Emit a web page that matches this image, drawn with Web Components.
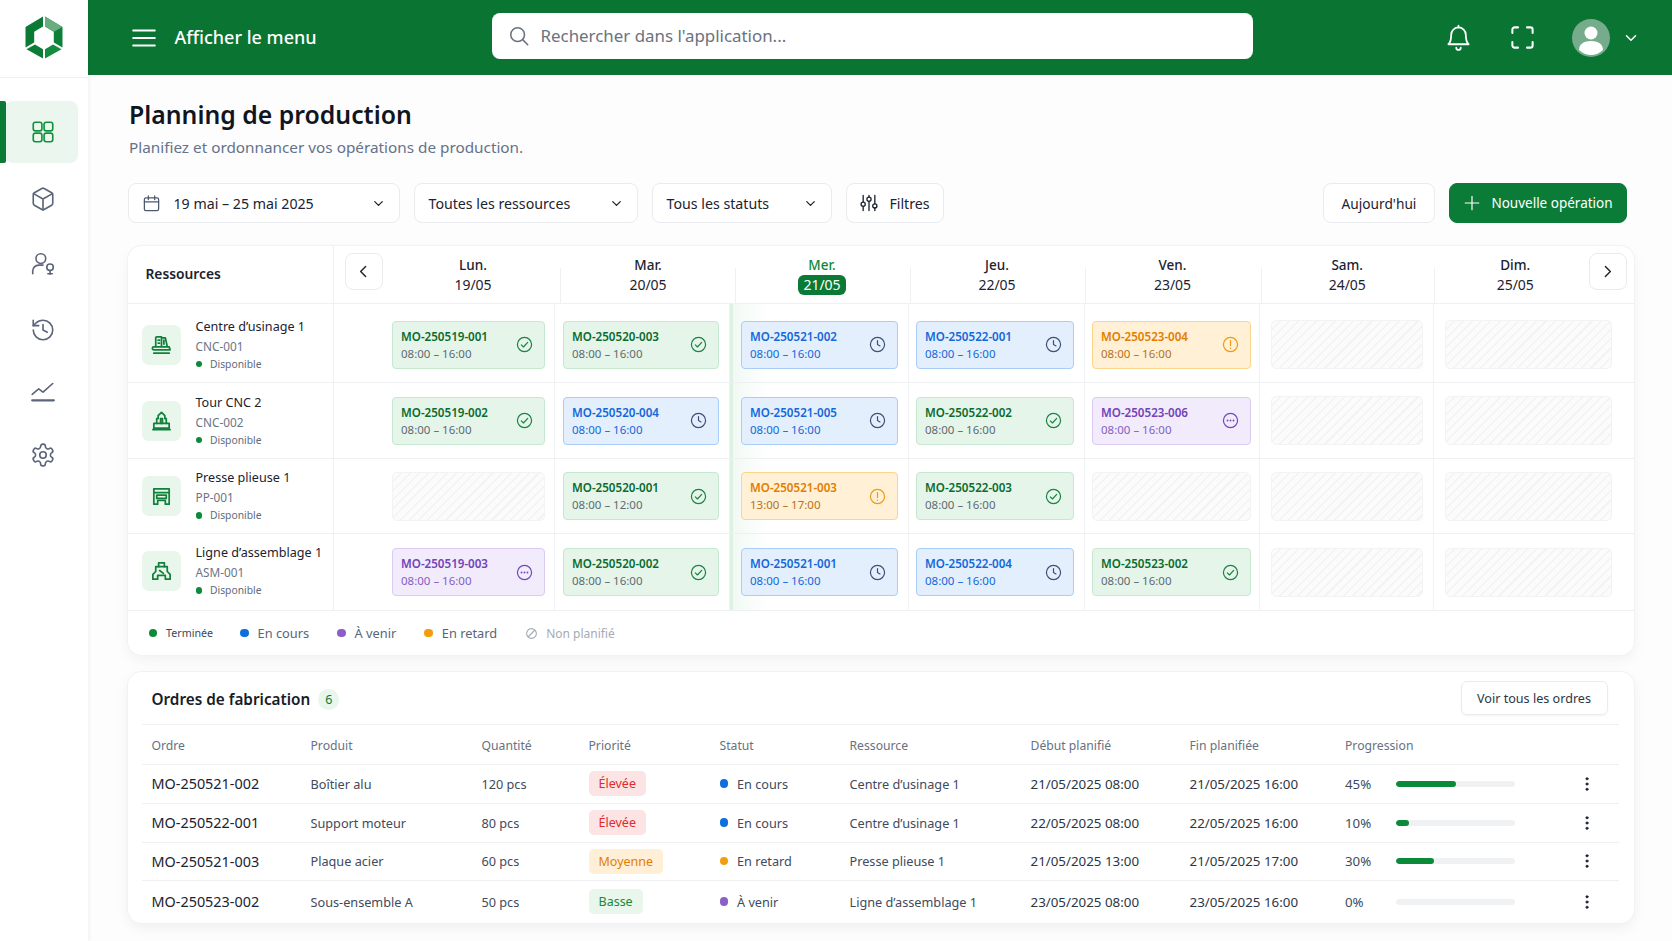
<!DOCTYPE html>
<html lang="fr">
<head>
<meta charset="utf-8">
<title>Planning de production</title>
<style>
  html, body { margin: 0; height: 100%; }
  body {
    width: 1672px;
    height: 941px;
    overflow: hidden;
    display: flex;
    background: #fdfdfe;
    color: #111827;
    font-family: "Noto Sans", "Liberation Sans", sans-serif;
  }
  app-main { flex: 1; min-width: 0; }
</style>
</head>
<body>
<app-sidebar></app-sidebar>
<app-main>
  <app-header></app-header>
  <page-content>
    <page-title heading="Planning de production">Planifiez et ordonnancer vos opérations de production.</page-title>
    <page-toolbar>
      <ui-select icon="calendar" width="272" pad="13" gap="13">19 mai – 25 mai 2025</ui-select>
      <ui-select width="224">Toutes les ressources</ui-select>
      <ui-select width="180">Tous les statuts</ui-select>
      <ui-button icon="sliders" width="98">Filtres</ui-button>
      <ui-button width="112" slot="right" size="13.7">Aujourd'hui</ui-button>
      <ui-button primary icon="plus" width="178" slot="right">Nouvelle opération</ui-button>
    </page-toolbar>
    <planning-board></planning-board>
    <orders-card></orders-card>
  </page-content>
</app-main>

<script>
const ICONS = {
  menu: '<path d="M2 5h20M2 12h20M2 19h20"/>',
  search: '<circle cx="10.5" cy="10.5" r="7.5"/><path d="m16 16 5.5 5.5"/>',
  bell: '<path d="M12 3a6.5 6.5 0 0 0-6.5 6.5c0 5-1 7.2-2.5 8.5h18c-1.5-1.3-2.5-3.5-2.5-8.5A6.5 6.5 0 0 0 12 3z"/><path d="M12 1.5V3M10 21a2 2 0 0 0 4 0"/>',
  expand: '<path d="M8 3H5a2 2 0 0 0-2 2v3M16 3h3a2 2 0 0 1 2 2v3M8 21H5a2 2 0 0 1-2-2v-3M16 21h3a2 2 0 0 0 2-2v-3"/>',
  chevron: '<path d="m6 9 6 6 6-6"/>',
  left: '<path d="m15 5-7 7 7 7"/>',
  right: '<path d="m9 5 7 7-7 7"/>',
  calendar: '<rect x="3" y="5" width="18" height="16" rx="2"/><path d="M3 10h18M8 2.5V7M16 2.5V7"/>',
  sliders: '<path d="M5 3v8M5 16v5M12 3v2M12 10v11M19 3v10M19 18v3"/><circle cx="5" cy="13.5" r="2.5"/><circle cx="12" cy="7.5" r="2.5"/><circle cx="19" cy="15.5" r="2.5"/>',
  plus: '<path d="M12 3v18M3 12h18"/>',
  done: '<circle cx="12" cy="12" r="10"/><path d="m7.5 12.5 3 3 6-6.5"/>',
  progress: '<circle cx="12" cy="12" r="10"/><path d="M12 6.5V12l3.5 2"/>',
  late: '<circle cx="12" cy="12" r="10"/><path d="M12 6.5v7M12 17v.5"/>',
  todo: '<circle cx="12" cy="12" r="10"/><g fill="currentColor" stroke="none"><circle cx="7.8" cy="12" r="1.3"/><circle cx="12" cy="12" r="1.3"/><circle cx="16.2" cy="12" r="1.3"/></g>',
  grid: '<rect x="3" y="3" width="8" height="8" rx="2"/><rect x="13" y="3" width="8" height="8" rx="2"/><rect x="3" y="13" width="8" height="8" rx="2"/><rect x="13" y="13" width="8" height="8" rx="2"/>',
  cube: '<path d="M21 8a2 2 0 0 0-1-1.73l-7-4a2 2 0 0 0-2 0l-7 4A2 2 0 0 0 3 8v8a2 2 0 0 0 1 1.73l7 4a2 2 0 0 0 2 0l7-4A2 2 0 0 0 21 16Z"/><path d="m3.3 7 8.7 5 8.7-5M12 22V12"/>',
  userbadge: '<circle cx="10" cy="7" r="4.5"/><path d="M2.5 21v-2.5a5.5 5.5 0 0 1 5.5-5.5h4"/><circle cx="18.5" cy="15" r="3"/><path d="M18.5 18v3.5M16.5 21h4"/>',
  history: '<path d="M3 12a9 9 0 1 0 9-9 9.75 9.75 0 0 0-6.74 2.74L3 8"/><path d="M3 3v5h5M12 7v5l4 2"/>',
  chart: '<path d="m2 16 6-5 4 3 9-8"/><path d="M2 21.5h20" stroke-width="2"/>',
  gear: '<path d="M12.22 2h-.44a2 2 0 0 0-2 2v.18a2 2 0 0 1-1 1.73l-.43.25a2 2 0 0 1-2 0l-.15-.08a2 2 0 0 0-2.73.73l-.22.38a2 2 0 0 0 .73 2.73l.15.1a2 2 0 0 1 1 1.72v.51a2 2 0 0 1-1 1.74l-.15.09a2 2 0 0 0-.73 2.73l.22.38a2 2 0 0 0 2.73.73l.15-.08a2 2 0 0 1 2 0l.43.25a2 2 0 0 1 1 1.73V20a2 2 0 0 0 2 2h.44a2 2 0 0 0 2-2v-.18a2 2 0 0 1 1-1.73l.43-.25a2 2 0 0 1 2 0l.15.08a2 2 0 0 0 2.73-.73l.22-.39a2 2 0 0 0-.73-2.73l-.15-.08a2 2 0 0 1-1-1.74v-.5a2 2 0 0 1 1-1.74l.15-.09a2 2 0 0 0 .73-2.73l-.22-.38a2 2 0 0 0-2.73-.73l-.15.08a2 2 0 0 1-2 0l-.43-.25a2 2 0 0 1-1-1.73V4a2 2 0 0 0-2-2z"/><circle cx="12" cy="12" r="3"/>',
  mill: '<path d="M6 14V5a1 1 0 0 1 1-1h5v10M12 5h4l2 9"/><path d="M8.5 7.5H10M8.5 10.5H10M14.5 7.5v4"/><path d="M4 14.5h16l1 3H4a1.5 1.5 0 0 1 0-3zM4 21h16"/>',
  lathe: '<path d="M7 15v-5h1.5V7L12 3.5 15.500 7v3H17v5"/><path d="M11 15v-5h2v5"/><path d="M4 20v-5h16v5zM3 21.500h18"/>',
  press: '<path d="M4 4h16v16h-4v-4H8v4H4z"/><path d="M4 8h16M7 10.500h10V14H7z"/>',
  line: '<path d="M9 3h6v4h3v5l3 3v5h-5v-4H8v4H3v-5l3-3V7h3z"/><path d="M9 7h6M10 11l4 3"/>',
  blocked: '<circle cx="12" cy="12" r="9"/><path d="m6 18 12-12"/>',
  dots: '<circle cx="12" cy="5" r="1.5" fill="currentColor"/><circle cx="12" cy="12" r="1.5" fill="currentColor"/><circle cx="12" cy="19" r="1.5" fill="currentColor"/>'
};

class UiIcon extends HTMLElement {
  connectedCallback() {
    const size = this.getAttribute("size") ?? 24;
    const sw = this.getAttribute("stroke") ?? 1.7;
    this.attachShadow({ mode: "open" }).innerHTML = `
      <style>:host { display: inline-flex; flex: none; } svg { display: block; }</style>
      <svg width="${size}" height="${size}" viewBox="0 0 24 24" fill="none" stroke="currentColor"
        stroke-width="${sw}" stroke-linecap="round" stroke-linejoin="round">${ICONS[this.getAttribute("name")]}</svg>`;
  }
}

class AppSidebar extends HTMLElement {
  connectedCallback() {
    const items = [["grid", 0], ["cube", 6], ["userbadge", 5], ["history", 5.5], ["chart", 0], ["gear", 5.5]];
    this.attachShadow({ mode: "open" }).innerHTML = `
      <style>
        :host {
          display: block;
          flex: none;
          width: 87.5px;
          height: 941px;
          background: #fff;
          box-shadow: 1px 0 4px rgba(16, 24, 40, .06);
          position: relative;
          z-index: 1;
        }
        .logo { height: 78px; display: flex; align-items: center; justify-content: center; border-bottom: 1px solid #f0f1f4; box-sizing: border-box; padding-bottom: 3px; }
        nav { padding-top: 23px; display: flex; flex-direction: column; }
        .item { height: 60px; display: flex; align-items: center; justify-content: center; color: #5a6579; margin-left: 5px; width: 73px; padding-left: 2px; box-sizing: border-box; position: relative; }
        .item.on { height: 62px; background: #ebf6ee; color: #12913f; border-radius: 8px; }
        .item.on::before { content: ""; position: absolute; left: -5px; top: 0; bottom: 0; width: 6px; background: #0a7a34; border-radius: 0 2px 2px 0; }
      </style>
      <div class="logo">
        <svg width="38" height="43" viewBox="-19 -21.5 38 43">
          <polygon points="-1,-21 -1,-11 -9.8,-5.8 -9.8,5 -18.5,10 -18.5,-10.5" fill="#0b7a35"/>
          <polygon points="1,-21 1,-11 9.8,-5.8 9.8,5 18.5,10 18.5,-10.5" fill="#0d8038"/>
          <polygon points="1,-21 1,-11 9.8,-5.8 18.5,-10.5" fill="#67ad7f"/>
          <polygon points="-17.5,11.8 -9,7 -1,11.8 -1,21" fill="#0c7b36"/>
          <polygon points="17.5,11.8 9,7 1,11.8 1,21" fill="#128c3f"/>
        </svg>
      </div>
      <nav>${items.map(([n, g], i) => `<div class="item ${i ? "" : "on"}" style="margin-top:${g}px"><ui-icon name="${n}" size="26" stroke="1.5"></ui-icon></div>`).join("")}</nav>`;
  }
}

class AppHeader extends HTMLElement {
  connectedCallback() {
    this.attachShadow({ mode: "open" }).innerHTML = `
      <style>
        :host { display: flex; align-items: center; height: 75px; background: #0a7433; color: #fff; padding-left: 43px; box-sizing: border-box; }
        .label { margin-left: 18px; width: 317px; font-size: 18px; font-weight: 500; padding-bottom: 2px; }
        .search { width: 761px; height: 46px; margin-top: -4px; background: #fff; border-radius: 8px; display: flex; align-items: center; gap: 11px; padding-left: 16px; box-sizing: border-box; color: #6b7280; font-size: 16.9px; }
        .actions { margin-left: 192px; display: flex; align-items: center; }
        .avatar { width: 38px; height: 38px; border-radius: 50%; background: #76ac8b; overflow: hidden; margin-left: 36px; }
        .avatar svg { display: block; }
      </style>
      <ui-icon name="menu" size="26" stroke="1.8"></ui-icon>
      <span class="label">Afficher le menu</span>
      <div class="search"><ui-icon name="search" size="22" stroke="1.7"></ui-icon><span>Rechercher dans l'application...</span></div>
      <div class="actions">
        <ui-icon name="bell" size="27" stroke="1.6"></ui-icon>
        <span style="width:37px"></span>
        <ui-icon name="expand" size="27" stroke="1.8"></ui-icon>
        <div class="avatar"><svg width="38" height="38" viewBox="0 0 38 38" fill="#fff"><circle cx="19" cy="14" r="6.5"/><path d="M7 31c0-6 5-9 12-9s12 3 12 9c-3 3-8 5-12 5s-9-2-12-5z"/></svg></div>
        <span style="width:12px"></span>
        <ui-icon name="chevron" size="18" stroke="2"></ui-icon>
      </div>`;
  }
}

class PageContent extends HTMLElement {
  connectedCallback() {
    this.attachShadow({ mode: "open" }).innerHTML = `
      <style>:host { display: flex; flex-direction: column; padding: 22px 38px 0 40px; }</style>
      <slot></slot>`;
  }
}

class PageTitle extends HTMLElement {
  connectedCallback() {
    this.attachShadow({ mode: "open" }).innerHTML = `
      <style>
        :host { display: block; padding-left: 1.5px; }
        h1 { margin: 0; font-size: 24.8px; line-height: 34px; font-weight: 600; color: #10151f; }
        p { margin: 5px 0 0; font-size: 15.3px; line-height: 22px; color: #64728a; }
      </style>
      <h1>${this.getAttribute("heading")}</h1>
      <p><slot></slot></p>`;
  }
}

class PageToolbar extends HTMLElement {
  connectedCallback() {
    this.attachShadow({ mode: "open" }).innerHTML = `
      <style>
        :host { display: flex; margin-top: 25px; height: 40px; gap: 14px; margin-bottom: 23px; }
        .right { margin-left: auto; display: flex; gap: 14px; margin-right: 7px; }
      </style>
      <slot></slot>
      <div class="right"><slot name="right"></slot></div>`;
  }
}

class UiSelect extends HTMLElement {
  connectedCallback() {
    const icon = this.getAttribute("icon");
    this.attachShadow({ mode: "open" }).innerHTML = `
      <style>
        :host {
          display: flex; align-items: center; box-sizing: border-box;
          width: ${this.getAttribute("width")}px; height: 40px;
          padding: 0 13px 0 ${this.getAttribute("pad") ?? 14}px;
          gap: ${this.getAttribute("gap") ?? 0}px;
          background: #fff; border: 1px solid #e9ebef; border-radius: 8px;
          font-size: 14.2px; color: #1b2230;
        }
        .t { flex: 1; white-space: nowrap; }
        ui-icon.i { color: #4d5a70; }
      </style>
      ${icon ? `<ui-icon class="i" name="${icon}" size="19" stroke="1.6"></ui-icon>` : ""}
      <span class="t"><slot></slot></span>
      <ui-icon name="chevron" size="15" stroke="2"></ui-icon>`;
  }
}

class UiButton extends HTMLElement {
  connectedCallback() {
    const icon = this.getAttribute("icon");
    const primary = this.hasAttribute("primary");
    const size = this.getAttribute("size") ?? (primary ? 13.5 : 14.2);
    this.attachShadow({ mode: "open" }).innerHTML = `
      <style>
        :host {
          display: flex; align-items: center; justify-content: center; box-sizing: border-box;
          width: ${this.getAttribute("width")}px; height: 40px; gap: ${primary ? 10 : 10}px;
          background: ${primary ? "#0b7c37" : "#fff"};
          color: ${primary ? "#fff" : "#1b2230"};
          border: 1px solid ${primary ? "#0b7c37" : "#e9ebef"};
          border-radius: 8px; font-size: ${size}px; white-space: nowrap;
        }
      </style>
      ${icon ? `<ui-icon name="${icon}" size="${primary ? 18 : 20}" stroke="1.6"></ui-icon>` : ""}
      <slot></slot>`;
  }
}

const CARD_THEME = {
  done: ["#e6f5ea", "#c6e8d0", "#0a6b2f", "#5e6a72", "#1a8244"],
  progress: ["#e3effd", "#a8cdf8", "#1467d8", "#1467d8", "#3f5078"],
  late: ["#fff0d6", "#fbd58e", "#e27d00", "#b4721a", "#ef9a12"],
  todo: ["#f2ebfc", "#dbcbf3", "#7142b8", "#8560c0", "#7347bb"]
};

class OpCard extends HTMLElement {
  connectedCallback() {
    const status = this.getAttribute("status");
    const root = this.attachShadow({ mode: "open" });
    if (status === "empty") {
      root.innerHTML = `
        <style>
          :host {
            display: block; width: 100%; height: 49px; box-sizing: border-box;
            border: 1px solid #f2f3f5; border-radius: 5px;
            background: repeating-linear-gradient(135deg, #fbfbfc 0 5px, #f2f3f5 5px 6.5px);
          }
        </style>`;
      return;
    }
    const [bg, border, idc, timec, iconc] = CARD_THEME[status];
    root.innerHTML = `
      <style>
        :host {
          display: flex; align-items: center; justify-content: space-between;
          width: 100%; height: 48px; box-sizing: border-box; padding: 0 11px 0 8.5px;
          background: ${bg}; border: 1px solid ${border}; border-radius: 4px;
        }
        .id { font-size: 11.6px; line-height: 17px; font-weight: 600; color: ${idc}; white-space: nowrap; }
        .time { font-size: 11.5px; line-height: 17px; color: ${timec}; white-space: nowrap; }
        ui-icon { color: ${iconc}; }
      </style>
      <div><div class="id">${this.getAttribute("op")}</div><div class="time">${this.getAttribute("time")}</div></div>
      <ui-icon name="${status}" size="17" stroke="1.7"></ui-icon>`;
  }
}

class ResourceCell extends HTMLElement {
  connectedCallback() {
    this.attachShadow({ mode: "open" }).innerHTML = `
      <style>
        :host { display: flex; align-items: center; gap: 15px; padding-left: 14px; height: 100%; box-sizing: border-box; }
        .tile { width: 39px; height: 40px; border-radius: 7px; background: #e8f6ec; color: #10803a; display: flex; align-items: center; justify-content: center; }
        .name { font-size: 12.6px; line-height: 20px; color: #1b2230; white-space: nowrap; }
        .code { font-size: 11.8px; line-height: 19px; color: #6a7585; }
        .st { font-size: 10.3px; line-height: 17px; color: #5f6b7c; display: flex; align-items: center; gap: 8px; }
        .st i { width: 6.5px; height: 6.5px; border-radius: 50%; background: #0b8a3a; }
      </style>
      <div class="tile"><ui-icon name="${this.getAttribute("icon")}" size="23" stroke="1.8"></ui-icon></div>
      <div>
        <div class="name">${this.getAttribute("name")}</div>
        <div class="code">${this.getAttribute("code")}</div>
        <div class="st"><i></i>Disponible</div>
      </div>`;
  }
}

class PlanningBoard extends HTMLElement {
  connectedCallback() {
    const days = [["Lun.", "19/05", 0, 4], ["Mar.", "20/05", 0, 2], ["Mer.", "21/05", 1, 0], ["Jeu.", "22/05", 0, 0], ["Ven.", "23/05", 0, 0], ["Sam.", "24/05", 0, 0], ["Dim.", "25/05", 0, 4]];
    const pads = [[58, 9], [8, 10], [11, 10], [7, 10], [7, 8], [11, 10], [11, 22]];
    const slot = "08:00 – 16:00";
    const rows = [
      { name: "Centre d’usinage 1", code: "CNC-001", icon: "mill", h: 79, nudge: 3, rnudge: 3, ops: [["MO-250519-001", slot, "done"], ["MO-250520-003", slot, "done"], ["MO-250521-002", slot, "progress"], ["MO-250522-001", slot, "progress"], ["MO-250523-004", slot, "late"]] },
      { name: "Tour CNC 2", code: "CNC-002", icon: "lathe", h: 76, nudge: 0, rnudge: 0, ops: [["MO-250519-002", slot, "done"], ["MO-250520-004", slot, "progress"], ["MO-250521-005", slot, "progress"], ["MO-250522-002", slot, "done"], ["MO-250523-006", slot, "todo"]] },
      { name: "Presse plieuse 1", code: "PP-001", icon: "press", h: 75, nudge: 0, rnudge: 0, ops: [null, ["MO-250520-001", "08:00 – 12:00", "done"], ["MO-250521-003", "13:00 – 17:00", "late"], ["MO-250522-003", slot, "done"], null] },
      { name: "Ligne d’assemblage 1", code: "ASM-001", icon: "line", h: 77, nudge: 0, rnudge: 0, shift: 2, ops: [["MO-250519-003", slot, "todo"], ["MO-250520-002", slot, "done"], ["MO-250521-001", slot, "progress"], ["MO-250522-004", slot, "progress"], ["MO-250523-002", slot, "done"]] }
    ];
    const body = rows.map((r) => {
      const cells = days.map((d, i) => {
        const op = r.ops[i];
        const card = op ? `<op-card op="${op[0]}" time="${op[1]}" status="${op[2]}"></op-card>` : `<op-card status="empty"></op-card>`;
        return `<div class="cell ${d[2] ? "today" : ""}" style="padding:${r.nudge}px ${pads[i][1]}px 0 ${pads[i][0]}px">${card}</div>`;
      }).join("");
      return `<div class="row" style="height:${r.h}px"><div class="res" style="padding:${r.rnudge}px 0 ${r.shift ?? 0}px"><resource-cell name="${r.name}" code="${r.code}" icon="${r.icon}"></resource-cell></div>${cells}</div>`;
    }).join("");
    this.attachShadow({ mode: "open" }).innerHTML = `
      <style>
        :host {
          display: block; height: 409px; background: #fff; border-radius: 14px; margin-bottom: 17px;
          box-shadow: 0 0 0 1px #f1f2f5, 0 5px 14px rgba(16, 24, 40, .05);
        }
        .head { display: grid; grid-template-columns: 206px 226px 175px 175px 175px 176px 173.5px 199.5px; height: 58px; border-bottom: 1px solid #eef0f3; box-sizing: border-box; }
        .title { display: flex; align-items: center; padding: 0 0 2px 18px; font-size: 13.8px; font-weight: 600; color: #1b2230; border-right: 1px solid #eef0f3; }
        .day { display: flex; align-items: center; gap: 0; position: relative; }
        .day + .day::before { content: ""; position: absolute; left: 0; top: 22px; bottom: 0; width: 1px; background: #eef0f3; }
        .lbl { flex: 1; text-align: center; font-size: 14px; line-height: 20px; color: #1b2230; box-sizing: border-box; }
        .lbl b { display: block; font-weight: 500; font-size: 13.5px; }
        .now b { color: #0c8a3c; }
        .now span { display: inline-block; background: #0b7a35; color: #fff; border-radius: 6px; padding: 0 5px; line-height: 20px; }
        .nav { width: 38px; height: 37px; box-sizing: border-box; border: 1px solid #e9ebef; border-radius: 8px; background: #fff; display: flex; align-items: center; justify-content: center; color: #1b2230; margin-bottom: 6px; flex: none; }
        .nav.p { margin-left: 11px; }
        .nav.n { margin-right: 7px; margin-left: -4px; }
        .row { display: grid; grid-template-columns: 206px 221px 175px 179px 176px 175px 174px 200px; border-bottom: 1px solid #eef0f3; box-sizing: border-box; }
        .res { border-right: 1px solid #eef0f3; box-sizing: border-box; }
        .cell { display: flex; align-items: center; border-right: 1px solid #f0f2f4; box-sizing: border-box; }
        .cell:last-child { border-right: 0; }
        .today { background: linear-gradient(90deg, #def2e4 0 3px, #f1f9f4 3px, #fff 38px); }
        .legend { display: flex; align-items: center; height: 44px; font-size: 12.8px; color: #5a6577; padding-left: 21px; }
        .legend i { width: 8.5px; height: 8.5px; border-radius: 50%; margin-right: 9px; flex: none; }
        .legend span { margin-right: 28px; }
        .legend .sm { font-size: 10.7px; color: #3d4757; margin-right: 27px; }
        .legend .off { color: #a3abb6; display: inline-flex; align-items: center; gap: 8px; font-size: 12px; }
      </style>
      <div class="head">
        <div class="title">Ressources</div>
        ${days.map((d, i) => `
          <div class="day">
            ${i === 0 ? `<div class="nav p"><ui-icon name="left" size="17" stroke="2"></ui-icon></div>` : ""}
            <div class="lbl ${d[2] ? "now" : ""}" style="padding-left:${d[3]}px"><b>${d[0]}</b><span>${d[1]}</span></div>
            ${i === 6 ? `<div class="nav n"><ui-icon name="right" size="17" stroke="2"></ui-icon></div>` : ""}
          </div>`).join("")}
      </div>
      ${body}
      <div class="legend">
        <i style="background:#0b8a3a"></i><span class="sm">Terminée</span>
        <i style="background:#0d6fdc"></i><span>En cours</span>
        <i style="background:#8a5fc9"></i><span>À venir</span>
        <i style="background:#f39c0c"></i><span>En retard</span>
        <span class="off"><ui-icon name="blocked" size="13" stroke="2"></ui-icon>Non planifié</span>
      </div>`;
  }
}

const PRIORITY = { "Élevée": ["#fde4e4", "#e02a2a"], "Moyenne": ["#ffefd6", "#e27d00"], "Basse": ["#e8f6ec", "#16893f"] };
const STATE = { "En cours": "#0d6fdc", "En retard": "#f39c0c", "À venir": "#8a5fc9" };
const COLS = "159px 171px 107px 131px 130px 181px 159px 155.5px 1fr";

class OrderRow extends HTMLElement {
  connectedCallback() {
    const a = (k) => this.getAttribute(k);
    const [pbg, pfg] = PRIORITY[a("priority")];
    this.attachShadow({ mode: "open" }).innerHTML = `
      <style>
        :host {
          display: grid; grid-template-columns: ${COLS}; align-items: center; padding-left: 10px;
          height: ${a("h")}px; box-sizing: border-box; border-top: 1px solid #eef0f3; padding-bottom: 1px;
          font-size: 12.7px; color: #414b5c; white-space: nowrap;
        }
        .op { font-size: 14.4px; color: #1b2230; }
        .pill { display: inline-block; background: ${pbg}; color: ${pfg}; padding: 0 10px; line-height: 25px; border-radius: 5px; font-size: 12.5px; }
        .st { display: flex; align-items: center; gap: 9px; }
        .st i { width: 8.5px; height: 8.5px; border-radius: 50%; background: ${STATE[a("state")]}; }
        .date { font-size: 13.35px; color: #2d3645; }
        .prog { display: flex; align-items: center; font-size: 13.3px; }
        .pct { width: 50.5px; }
        .bar { width: 119px; height: 6px; border-radius: 3px; background: #f0f1f3; overflow: hidden; }
        .bar b { display: block; height: 100%; border-radius: 3px; background: #0b8a3a; width: ${a("fill")}px; }
        .more { margin-left: 63px; color: #1b2230; }
      </style>
      <span class="op">${a("op")}</span>
      <span>${a("product")}</span>
      <span>${a("qty")}</span>
      <span><span class="pill">${a("priority")}</span></span>
      <span class="st"><i></i>${a("state")}</span>
      <span>${a("resource")}</span>
      <span class="date">${a("start")}</span>
      <span class="date">${a("end")}</span>
      <span class="prog"><span class="pct">${a("pct")}</span><span class="bar"><b></b></span><ui-icon class="more" name="dots" size="18" stroke="1"></ui-icon></span>`;
  }
}

class OrdersCard extends HTMLElement {
  connectedCallback() {
    const heads = ["Ordre", "Produit", "Quantité", "Priorité", "Statut", "Ressource", "Début planifié", "Fin planifiée", "Progression"];
    const rows = [
      ["MO-250521-002", "Boîtier alu", "120 pcs", "Élevée", "En cours", "Centre d’usinage 1", "21/05/2025 08:00", "21/05/2025 16:00", "45%", 60, 39],
      ["MO-250522-001", "Support moteur", "80 pcs", "Élevée", "En cours", "Centre d’usinage 1", "22/05/2025 08:00", "22/05/2025 16:00", "10%", 13, 39],
      ["MO-250521-003", "Plaque acier", "60 pcs", "Moyenne", "En retard", "Presse plieuse 1", "21/05/2025 13:00", "21/05/2025 17:00", "30%", 38, 38],
      ["MO-250523-002", "Sous-ensemble A", "50 pcs", "Basse", "À venir", "Ligne d’assemblage 1", "23/05/2025 08:00", "23/05/2025 16:00", "0%", 0, 43]
    ];
    this.attachShadow({ mode: "open" }).innerHTML = `
      <style>
        :host {
          display: block; height: 251px; background: #fff; border-radius: 14px; padding: 0 15px 0 14px;
          box-shadow: 0 0 0 1px #f1f2f5, 0 5px 14px rgba(16, 24, 40, .06);
        }
        .top { display: flex; align-items: center; height: 52px; padding-left: 10px; padding-right: 11.5px; box-sizing: border-box; }
        h2 { margin: 0; font-size: 15.3px; font-weight: 600; color: #161c28; padding-top: 2px; }
        .count { width: 21px; height: 21px; border-radius: 50%; background: #e8f6ec; color: #0c7a36; font-size: 12.5px; display: flex; align-items: center; justify-content: center; margin-left: 8px; margin-top: 2px; }
        .all { margin-left: auto; width: 147px; height: 34px; box-sizing: border-box; border: 1px solid #e9ebef; border-radius: 6px; display: flex; align-items: center; justify-content: center; font-size: 12.6px; color: #2d3645; box-shadow: 0 1px 2px rgba(16, 24, 40, .05); }
        .heads { display: grid; grid-template-columns: ${COLS}; align-items: center; height: 40px; padding: 2px 0 0 10px; box-sizing: border-box; border-top: 1px solid #eef0f3; font-size: 12.2px; color: #667182; }
      </style>
      <div class="top">
        <h2>Ordres de fabrication</h2><span class="count">6</span>
        <span class="all">Voir tous les ordres</span>
      </div>
      <div class="heads">${heads.map((h) => `<span>${h}</span>`).join("")}</div>
      ${rows.map((r) => `<order-row op="${r[0]}" product="${r[1]}" qty="${r[2]}" priority="${r[3]}" state="${r[4]}" resource="${r[5]}" start="${r[6]}" end="${r[7]}" pct="${r[8]}" fill="${r[9]}" h="${r[10]}"></order-row>`).join("")}`;
  }
}

customElements.define("ui-icon", UiIcon);
customElements.define("app-sidebar", AppSidebar);
customElements.define("app-header", AppHeader);
customElements.define("page-content", PageContent);
customElements.define("page-title", PageTitle);
customElements.define("page-toolbar", PageToolbar);
customElements.define("ui-select", UiSelect);
customElements.define("ui-button", UiButton);
customElements.define("op-card", OpCard);
customElements.define("resource-cell", ResourceCell);
customElements.define("planning-board", PlanningBoard);
customElements.define("order-row", OrderRow);
customElements.define("orders-card", OrdersCard);
</script>
</body>
</html>
